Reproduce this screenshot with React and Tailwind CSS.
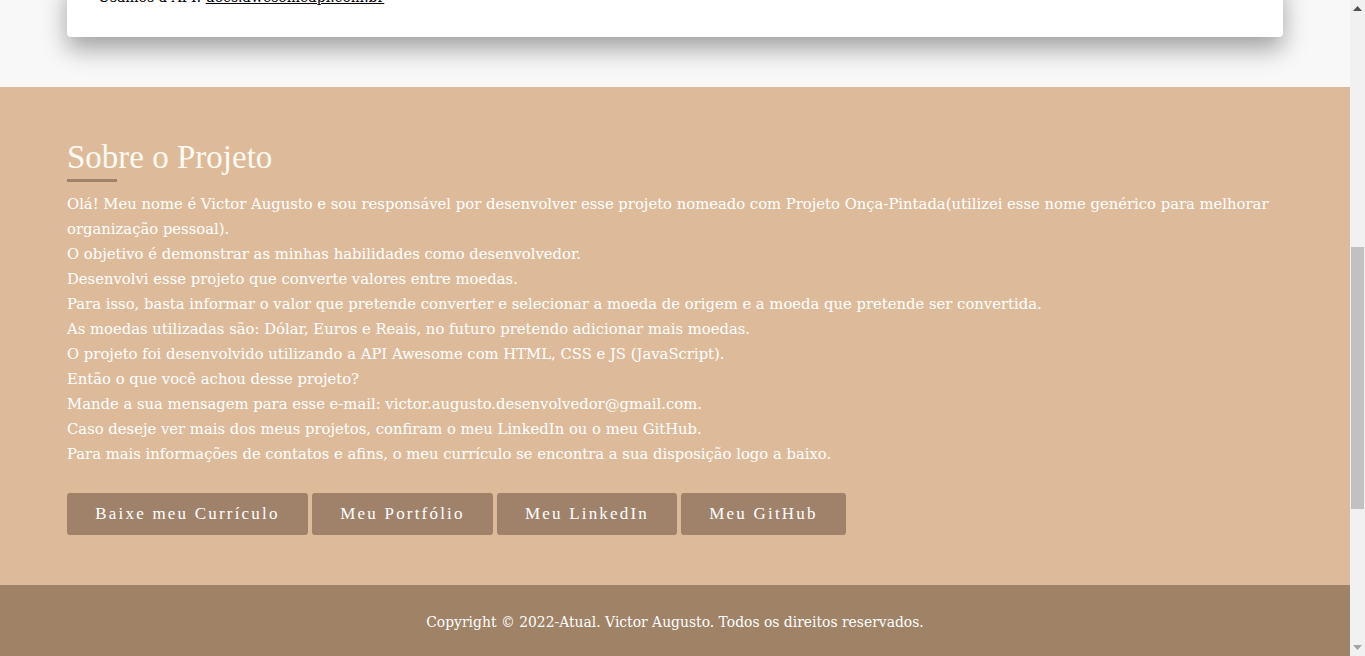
import React from "react";

const paragraphs = [
  "Olá! Meu nome é Victor Augusto e sou responsável por desenvolver esse projeto nomeado com Projeto Onça-Pintada(utilizei esse nome genérico para melhorar organização pessoal).",
  "O objetivo é demonstrar as minhas habilidades como desenvolvedor.",
  "Desenvolvi esse projeto que converte valores entre moedas.",
  "Para isso, basta informar o valor que pretende converter e selecionar a moeda de origem e a moeda que pretende ser convertida.",
  "As moedas utilizadas são: Dólar, Euros e Reais, no futuro pretendo adicionar mais moedas.",
  "O projeto foi desenvolvido utilizando a API Awesome com HTML, CSS e JS (JavaScript).",
  "Então o que você achou desse projeto?",
  "Mande a sua mensagem para esse e-mail: victor.augusto.desenvolvedor@gmail.com.",
  "Caso deseje ver mais dos meus projetos, confiram o meu LinkedIn ou o meu GitHub.",
  "Para mais informações de contatos e afins, o meu currículo se encontra a sua disposição logo a baixo.",
];

const buttons = [
  { label: "Baixe meu Currículo", w: "w-[241px]" },
  { label: "Meu Portfólio", w: "w-[181px]" },
  { label: "Meu LinkedIn", w: "w-[180px]" },
  { label: "Meu GitHub", w: "w-[165px]" },
];

function Scrollbar() {
  return (
    <div className="w-[15px] h-full bg-[#f1f1f1] flex flex-col items-center shrink-0">
      <div className="h-[17px] flex items-center justify-center">
        <svg width="9" height="5" viewBox="0 0 9 5">
          <path d="M0 5 L4.5 0 L9 5 Z" fill="#505050" />
        </svg>
      </div>
      <div className="h-[230px]" />
      <div className="w-[13px] h-[262px] bg-[#c1c1c1]" />
      <div className="flex-1" />
      <div className="h-[17px] flex items-center justify-center">
        <svg width="9" height="5" viewBox="0 0 9 5">
          <path d="M0 0 L9 0 L4.5 5 Z" fill="#a3a3a3" />
        </svg>
      </div>
    </div>
  );
}

export default function App() {
  return (
    <div className="h-[656px] w-full flex overflow-hidden bg-[#f8f8f8] font-['DejaVu_Serif',serif]">
      <div className="flex-1 flex flex-col min-w-0">
        {/* card tail */}
        <div className="h-[87px] shrink-0 px-[67px] overflow-hidden bg-[#f8f8f8]">
          <div className="-mt-[20px] h-[57px] bg-white rounded-b-[4px] shadow-[0_12px_24px_rgba(0,0,0,0.35)] px-[31px] pt-[7px]">
            <p className="text-[14px] text-black">
              Usamos a API: <a className="underline">docs.awesomeapi.com.br</a>
            </p>
          </div>
        </div>

        {/* sobre */}
        <section className="bg-[#ddbb9a] px-[67px] pt-[49px] h-[498px] shrink-0">
          <h2 className="text-[33px] leading-[42px] text-[#fffaf2] font-['Liberation_Serif',serif]">Sobre o Projeto</h2>
          <div className="w-[50px] h-[3px] bg-[#a0826a] mt-[1px] mb-[9px]" />
          <div className="text-[14.8px] leading-[25px] text-white">
            {paragraphs.map((p) => (
              <p key={p}>{p}</p>
            ))}
          </div>
          <div className="flex gap-[4px] mt-[27px]">
            {buttons.map((b) => (
              <button
                key={b.label}
                className={`${b.w} h-[42px] bg-[#a0826a] rounded-[3px] text-white text-[17px] tracking-[2.2px] font-['Liberation_Serif',serif]`}
              >
                {b.label}
              </button>
            ))}
          </div>
        </section>

        {/* footer */}
        <footer className="flex-1 bg-[#a08266] flex items-center justify-center pt-[4px]">
          <p className="text-[13.9px] text-white">
            Copyright © 2022-Atual. Victor Augusto. Todos os direitos reservados.
          </p>
        </footer>
      </div>
      <Scrollbar />
    </div>
  );
}
